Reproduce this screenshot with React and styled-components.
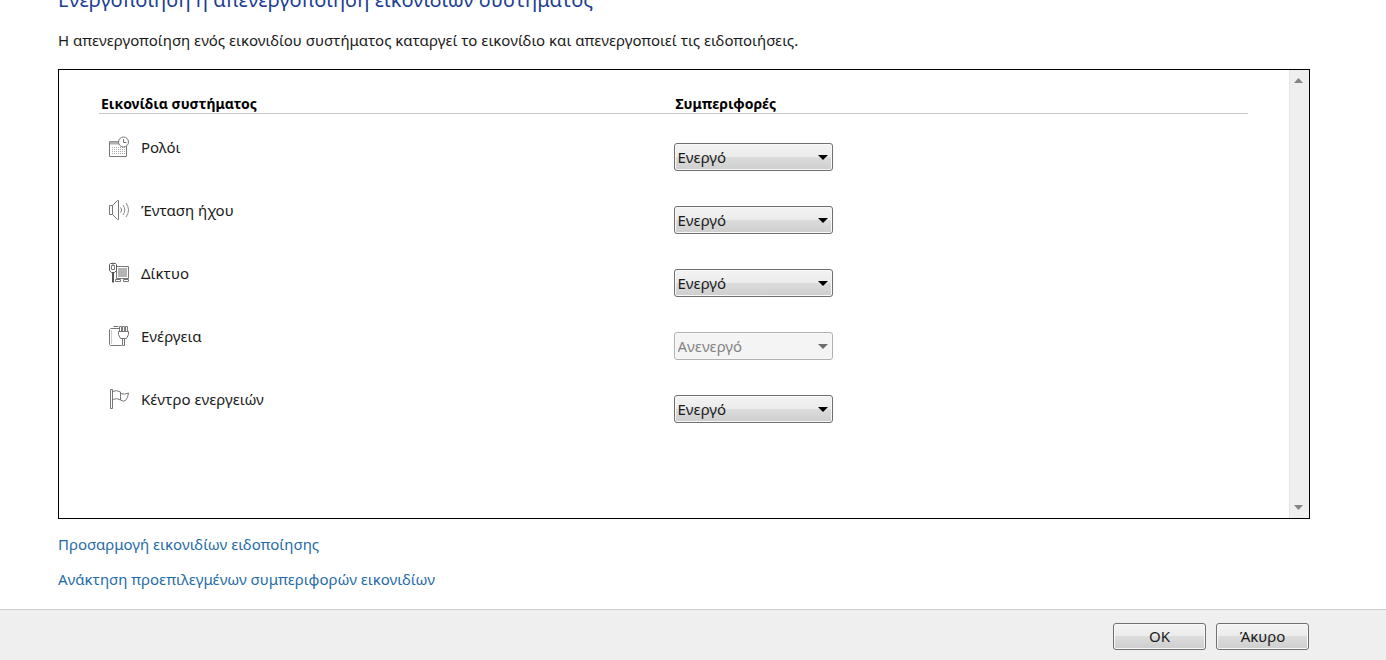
import React from "react";
import styled, { createGlobalStyle } from "styled-components";

const GlobalStyle = createGlobalStyle`
  * { box-sizing: border-box; }
  body {
    margin: 0;
    background: #fff;
    color: #1a1a1a;
    font: 15px/20px "Noto Sans", "Open Sans", sans-serif;
  }
`;

const Page = styled.div`
  display: flex;
  flex-direction: column;
  min-height: 100vh;
`;

const Main = styled.main`
  padding: 0 76px 20px 58px;
`;

const TitleClip = styled.header`
  display: flex;
  align-items: flex-end;
  height: 14px;
  overflow: hidden;
`;

const Title = styled.h1`
  flex: none;
  margin: 0;
  font-size: 20px;
  line-height: 28px;
  font-weight: 400;
  color: #1c3f94;
  white-space: nowrap;
`;

const Intro = styled.p`
  margin: 16px 0 19px;
`;

const Panel = styled.section`
  display: flex;
  height: 450px;
  border: 1px solid #000;
`;

const PanelBody = styled.div`
  flex: 1;
  padding: 24px 41px 0 40px;
`;

const Table = styled.table`
  width: 100%;
  table-layout: fixed;
  border-collapse: separate;
  border-spacing: 0;
`;

const Heading = styled.th`
  height: 20px;
  padding: 0 2px;
  border-bottom: 1px solid #c8c8c8;
  color: #000;
  font-size: 14px;
  font-weight: 700;
  line-height: 19px;
  text-align: left;
`;

const Row = styled.tr`
  height: 63px;
`;

const NameCell = styled.td`
  padding: 22px 0 0 10px;
  vertical-align: top;
`;

const Name = styled.label`
  display: flex;
  align-items: center;
  gap: 10px;
`;

const Icon = styled.svg`
  flex: none;
  width: 22px;
  height: 22px;
  fill: none;
  stroke: #777;
`;

const SelectCell = styled.td`
  padding: 29px 0 0;
  vertical-align: top;
`;

const SelectBox = styled.div`
  position: relative;
  width: 159px;
  height: 28px;
  color: ${(p) => (p.$off ? "#6e6e6e" : "#000")};

  &::after {
    content: "";
    position: absolute;
    top: 12px;
    right: 5px;
    border: solid transparent;
    border-width: 5px 5px 0;
    border-top-color: currentColor;
    pointer-events: none;
  }
`;

const glossy = "linear-gradient(#f3f3f3 0, #ebebeb 50%, #dcdcdc 50%, #cecece 100%)";

const Select = styled.select`
  appearance: none;
  display: block;
  width: 100%;
  height: 100%;
  margin: 0;
  padding: 0 20px 0 3px;
  border: 1px solid #707070;
  border-radius: 3px;
  background: ${glossy};
  box-shadow: inset 0 0 0 1px #f8f8f8;
  color: #1a1a1a;
  font: inherit;

  &:disabled {
    border-color: #adb2b5;
    background: #f4f4f4;
    color: #838383;
    opacity: 1;
  }
`;

const Scrollbar = styled.div`
  display: flex;
  flex-direction: column;
  justify-content: space-between;
  width: 20px;
  padding-right: 3px;
  border-left: 1px solid #e6e6e6;
  background: #efefef;
`;

const ScrollButton = styled.button`
  display: grid;
  place-items: center;
  width: 100%;
  height: 21px;
  padding: 0;
  border: 0;
  background: none;
  color: #858585;
`;

const Links = styled.nav`
  display: flex;
  flex-direction: column;
  align-items: flex-start;
  gap: 15px;
  margin-top: 15px;
`;

const Link = styled.a`
  color: #1f6ca8;
  text-decoration: none;
`;

const Footer = styled.footer`
  flex: 1;
  display: flex;
  justify-content: flex-end;
  align-items: flex-start;
  gap: 10px;
  padding: 13px 77px 9px;
  border-top: 1px solid #ccc;
  background: #efefef;
`;

const Button = styled.button`
  width: 93px;
  height: 27px;
  padding: 0 0 2px;
  border: 1px solid #707070;
  border-radius: 3px;
  background: ${glossy};
  box-shadow: inset 0 0 0 1px #f8f8f8;
  color: #1a1a1a;
  font: inherit;
`;

const ClockIcon = () => (
  <Icon viewBox="0 0 22 22" aria-hidden="true">
    <path d="M.5 5.5h17v15H.5z" fill="#fff" />
    <path d="M1 7h11" stroke="#b0b0b0" strokeWidth="3" />
    <path d="M3 11.5h13M3 13.5h13M3 15.5h13M3 17.5h13" stroke="#aaa" strokeDasharray="1 1" />
    <circle cx="14.5" cy="6" r="5" fill="#fff" />
    <path d="M14.5 3v3.500h3" />
  </Icon>
);

const SoundIcon = () => (
  <Icon viewBox="0 0 22 22" aria-hidden="true">
    <path d="M.5 6.500h3v9h-3zM3.500 6.500L8.500 1.500h1v19h-1L3.500 15.500z" />
    <path d="M11.500 8.500q2.500 2.500 0 5" />
    <path d="M14 6q3.500 5 0 10M17 4q5 7 0 14" stroke="#888" />
  </Icon>
);

const NetworkIcon = () => (
  <Icon viewBox="0 0 22 22" aria-hidden="true">
    <path d="M7.500 4.500h12v12h-12z" fill="#fff" />
    <path d="M9 6h9v9H9z" fill="#b4b4b4" stroke="none" />
    <path d="M6.500 19.500v-2h5v2zM14.500 19.500v-2h5v2z" fill="#fff" />
    <path d="M1.500 1.500h5l1 1v6l-2 2h-3l-2-2v-6z" fill="#fff" stroke="#555" />
    <path d="M2.500 3.500h3v4h-3zM4 .5v3" stroke="#777" />
    <path d="M4 11v9.500" stroke="#555" strokeWidth="2" />
  </Icon>
);

const PowerIcon = () => (
  <Icon viewBox="0 0 22 22" aria-hidden="true">
    <path d="M10.500 3.500h-9l-1 1v15l1 1h11l1-1v-2M4.500 1.500h5" />
    <path d="M2.500 5v14" stroke="#ccc" />
    <path d="M10.500 6.500v-5h2v5M13.500 6.500v-5h2v5M16.500 6.500v-5h2v5" />
    <path d="M9.500 6.500h10v3l-2 4h-6l-2-4z" fill="#fff" />
    <path d="M13.500 14v6.500h2V14" fill="#fff" />
  </Icon>
);

const FlagIcon = () => (
  <Icon viewBox="0 0 22 22" aria-hidden="true">
    <path d="M1.500 1.500h2v19h-2z" />
    <path d="M3.500 3.500q4-2 8 .5v8q-3.500-2.500-8-.5M11.500 5.500q4 1.500 8-.5-.5 5-3 7.500-2 1.500-5-.5" />
  </Icon>
);

const rows = [
  { id: "clock", name: "Ρολόι", icon: ClockIcon, value: "Ενεργό" },
  { id: "volume", name: "Ένταση ήχου", icon: SoundIcon, value: "Ενεργό" },
  { id: "network", name: "Δίκτυο", icon: NetworkIcon, value: "Ενεργό" },
  { id: "power", name: "Ενέργεια", icon: PowerIcon, value: "Ανενεργό", off: true },
  { id: "action", name: "Κέντρο ενεργειών", icon: FlagIcon, value: "Ενεργό" },
];

export default function App() {
  return (
    <Page>
      <GlobalStyle />
      <Main>
        <TitleClip>
          <Title>Ενεργοποίηση ή απενεργοποίηση εικονιδίων συστήματος</Title>
        </TitleClip>
        <Intro>
          Η απενεργοποίηση ενός εικονιδίου συστήματος καταργεί το εικονίδιο και απενεργοποιεί τις
          ειδοποιήσεις.
        </Intro>
        <Panel>
          <PanelBody>
            <Table>
              <thead>
                <tr>
                  <Heading scope="col">Εικονίδια συστήματος</Heading>
                  <Heading scope="col">Συμπεριφορές</Heading>
                </tr>
              </thead>
              <tbody>
                {rows.map(({ id, name, icon: RowIcon, value, off }) => (
                  <Row key={id}>
                    <NameCell>
                      <Name htmlFor={id}>
                        <RowIcon />
                        {name}
                      </Name>
                    </NameCell>
                    <SelectCell>
                      <SelectBox $off={off}>
                        <Select id={id} defaultValue={value} disabled={off}>
                          <option>Ενεργό</option>
                          <option>Ανενεργό</option>
                        </Select>
                      </SelectBox>
                    </SelectCell>
                  </Row>
                ))}
              </tbody>
            </Table>
          </PanelBody>
          <Scrollbar>
            <ScrollButton type="button" aria-label="Επάνω">
              <svg width="9" height="5" fill="currentColor">
                <path d="M0 5L4.500 0L9 5z" />
              </svg>
            </ScrollButton>
            <ScrollButton type="button" aria-label="Κάτω">
              <svg width="9" height="5" fill="currentColor">
                <path d="M0 0h9L4.500 5z" />
              </svg>
            </ScrollButton>
          </Scrollbar>
        </Panel>
        <Links>
          <Link href="#notifications">Προσαρμογή εικονιδίων ειδοποίησης</Link>
          <Link href="#defaults">Ανάκτηση προεπιλεγμένων συμπεριφορών εικονιδίων</Link>
        </Links>
      </Main>
      <Footer>
        <Button type="button">OK</Button>
        <Button type="button">Άκυρο</Button>
      </Footer>
    </Page>
  );
}
